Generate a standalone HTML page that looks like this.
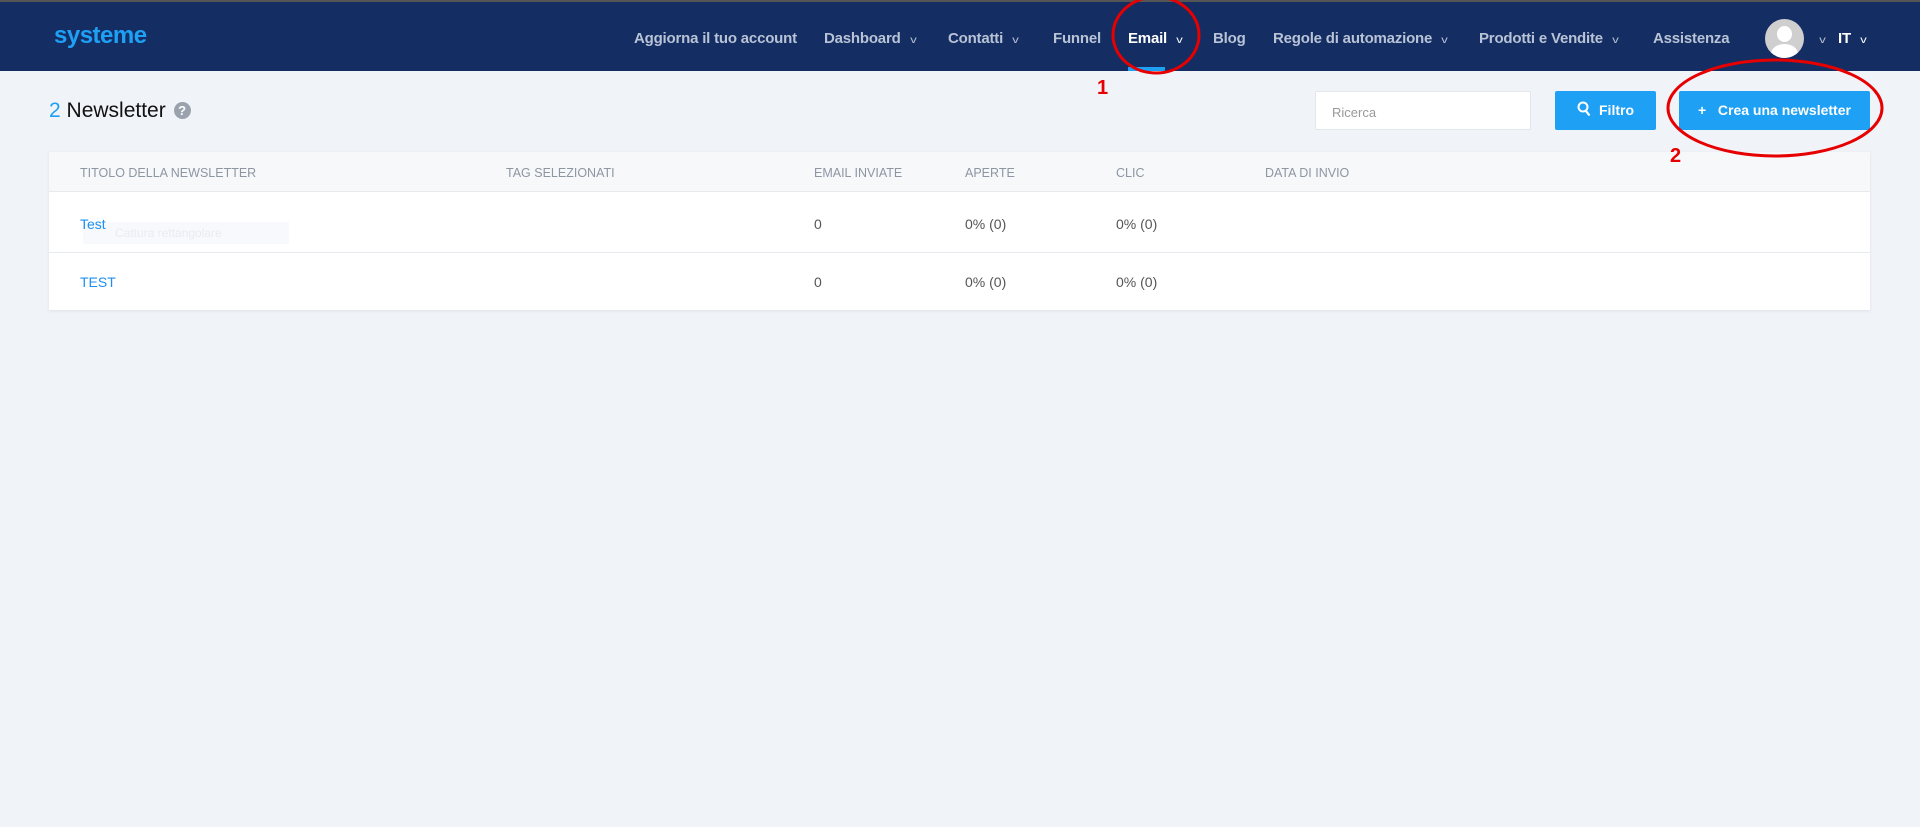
<!DOCTYPE html>
<html><head><meta charset="utf-8"><style>
*{margin:0;padding:0;box-sizing:border-box}
body{width:1920px;height:827px;background:#f0f3f8;font-family:"Liberation Sans",sans-serif;position:relative;overflow:hidden}
.nav{position:absolute;left:0;top:0;width:1920px;height:71px;background:#142d63;border-top:2px solid #555}
.logo{position:absolute;left:54px;top:20px;color:#1ea0f5;font-weight:bold;font-size:24px;letter-spacing:-0.5px}
.ni{position:absolute;top:28px;color:#b9c3d6;font-size:15px;font-weight:bold;white-space:nowrap;letter-spacing:-0.2px}
.ch{display:inline-block;margin-left:10px;font-size:10px;font-weight:normal;transform:scaleX(1.3)}
.av{position:absolute;left:1765px;top:17px;width:39px;height:39px;border-radius:50%;background:#cfcfcf;overflow:hidden}
.av:before{content:"";position:absolute;left:12px;top:7px;width:15px;height:16px;border-radius:50%;background:#fff}
.av:after{content:"";position:absolute;left:6px;top:25px;width:27px;height:20px;border-radius:50% 50% 0 0;background:#fff}
.title{position:absolute;left:49px;top:99px;font-size:21px;color:#111}
.title b{color:#1ea0f5;font-weight:normal}
.q{display:inline-block;width:17px;height:17px;border-radius:50%;background:#9aa3ad;color:#fff;font-size:13px;font-weight:bold;text-align:center;line-height:17px;vertical-align:2px;margin-left:2px}
.inp{position:absolute;left:1315px;top:91px;width:216px;height:39px;background:#fff;border:1px solid #e3e6ea;border-radius:2px;color:#999;font-size:13px;padding:13px 16px}
.btn{position:absolute;top:91px;height:39px;background:#1ea0f5;color:#fff;font-size:14px;font-weight:bold;border-radius:2px;text-align:center;line-height:39px}
.card{position:absolute;left:49px;top:152px;width:1821px;height:158px;background:#fff;box-shadow:0 1px 3px rgba(0,0,0,.08)}
.hd{position:absolute;left:0;top:0;width:100%;height:40px;background:#f7f8fa;border-bottom:1px solid #e6e9ee}
.r2{position:absolute;left:0;top:100px;width:100%;border-top:1px solid #e6e9ee}
.c{position:absolute;font-size:12.5px;color:#8d96a3;white-space:nowrap}
.d{position:absolute;font-size:14px;color:#555;white-space:nowrap}
.lk{color:#1e8ff0}
</style></head><body>
<div class="nav">
<div class="logo">systeme</div>
<div class="ni" style="left:634px">Aggiorna il tuo account</div>
<div class="ni" style="left:824px">Dashboard<span class="ch">v</span></div>
<div class="ni" style="left:948px">Contatti<span class="ch">v</span></div>
<div class="ni" style="left:1053px">Funnel</div>
<div class="ni" style="left:1128px;color:#fff">Email<span class="ch">v</span></div>
<div style="position:absolute;left:1128px;top:65px;width:37px;height:4px;background:#1ea0f5"></div>
<div class="ni" style="left:1213px">Blog</div>
<div class="ni" style="left:1273px">Regole di automazione<span class="ch">v</span></div>
<div class="ni" style="left:1479px">Prodotti e Vendite<span class="ch">v</span></div>
<div class="ni" style="left:1653px">Assistenza</div>
<div class="av"></div>
<div class="ni" style="left:1810px"><span class="ch">v</span></div>
<div class="ni" style="left:1838px;color:#fff">IT<span class="ch">v</span></div>
</div>
<div class="title"><b>2</b> Newsletter <span class="q">?</span></div>
<div class="inp">Ricerca</div>
<div class="btn" style="left:1555px;width:101px"><svg width="14" height="16" viewBox="0 0 14 16" style="vertical-align:-2px;margin-right:8px"><circle cx="6" cy="6" r="4.5" fill="none" stroke="#fff" stroke-width="2"/><path d="M9 10l3.5 4.5" stroke="#fff" stroke-width="2.2"/></svg>Filtro</div>
<div class="btn" style="left:1679px;width:191px">+&nbsp;&nbsp; Crea una newsletter</div>
<div class="card">
<div class="hd"></div>
<div class="r2"></div>
<div class="c" style="left:31px;top:14px">TITOLO DELLA NEWSLETTER</div>
<div class="c" style="left:457px;top:14px">TAG SELEZIONATI</div>
<div class="c" style="left:765px;top:14px">EMAIL INVIATE</div>
<div class="c" style="left:916px;top:14px">APERTE</div>
<div class="c" style="left:1067px;top:14px">CLIC</div>
<div class="c" style="left:1216px;top:14px">DATA DI INVIO</div>
<div style="position:absolute;left:34px;top:70px;width:206px;height:22px;background:#f7f9fc"></div>
<div class="d" style="left:66px;top:74px;color:#e8ecf1;font-size:12px">Cattura rettangolare</div>
<div class="d lk" style="left:31px;top:64px">Test</div>
<div class="d" style="left:765px;top:64px">0</div>
<div class="d" style="left:916px;top:64px">0% (0)</div>
<div class="d" style="left:1067px;top:64px">0% (0)</div>
<div class="d lk" style="left:31px;top:122px">TEST</div>
<div class="d" style="left:765px;top:122px">0</div>
<div class="d" style="left:916px;top:122px">0% (0)</div>
<div class="d" style="left:1067px;top:122px">0% (0)</div>
</div>
<svg width="1920" height="827" style="position:absolute;left:0;top:0">
<ellipse cx="1156" cy="35" rx="43" ry="38" fill="none" stroke="#e60000" stroke-width="3"/>
<ellipse cx="1775" cy="108" rx="107" ry="48" fill="none" stroke="#e60000" stroke-width="3"/>
<text x="1097" y="94" fill="#e60000" font-family="Liberation Sans" font-weight="bold" font-size="20">1</text>
<text x="1670" y="162" fill="#e60000" font-family="Liberation Sans" font-weight="bold" font-size="20">2</text>
</svg>
</body></html>
